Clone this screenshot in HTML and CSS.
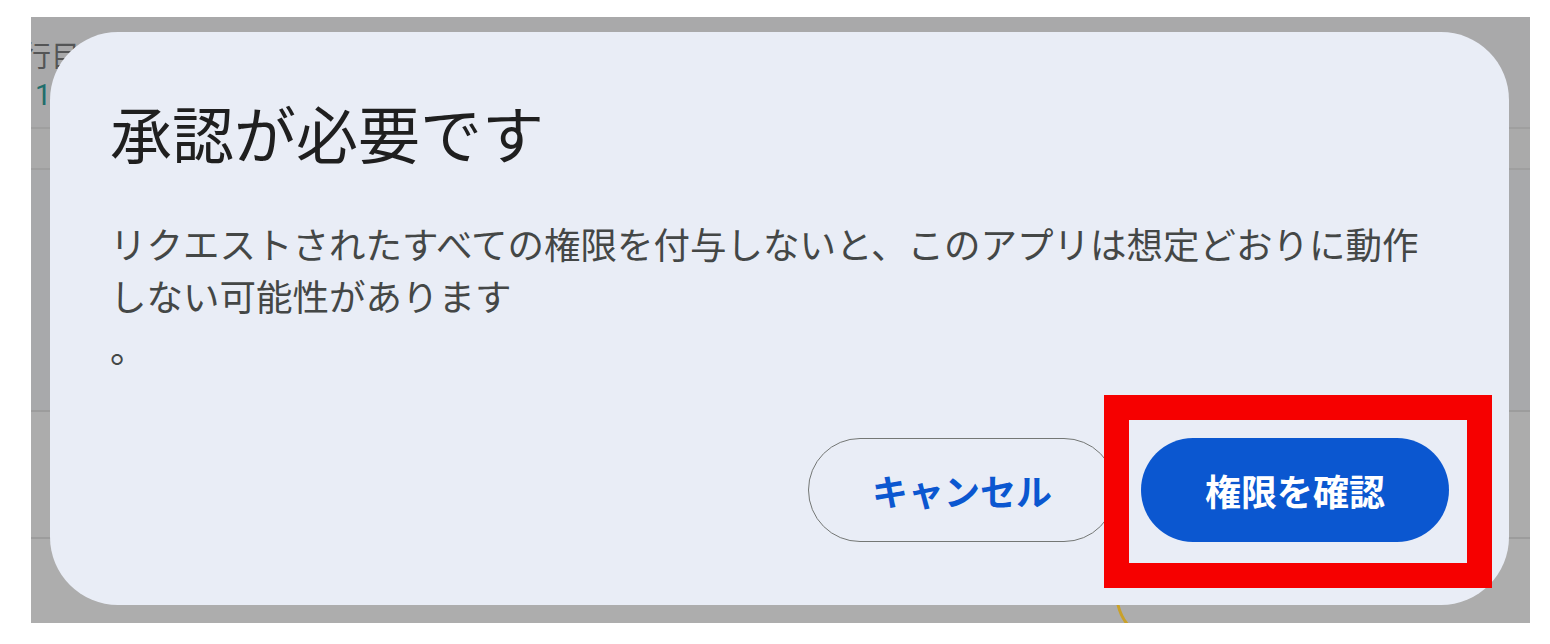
FILE: index.html
```html
<!DOCTYPE html>
<html lang="ja">
<head>
<meta charset="utf-8">
<title>承認が必要です</title>
<link rel="stylesheet" href="styles.css">
</head>
<body>
<div class="backdrop">
  <div class="bg-rows">
    <div class="bg-row r1">
      <div class="bg-label">行目</div>
      <div class="bg-num">1</div>
    </div>
    <div class="bg-row r2"></div>
    <div class="bg-row r3"></div>
    <div class="bg-row r4"></div>
    <div class="bg-row r5"></div>
  </div>
  <svg class="bg-arc" width="20" height="24" viewBox="0 0 20 24"><path d="M3 2 Q6 14 13 22" fill="none" stroke="#c9a12a" stroke-width="3" stroke-linecap="round"/></svg>
  <div class="dialog">
    <h1 class="dialog-title">承認が必要です</h1>
    <p class="dialog-text">リクエストされたすべての権限を付与しないと、このアプリは想定どおりに動作<br>しない可能性があります<br>。</p>
    <div class="dialog-actions">
      <button class="btn btn-outline">キャンセル</button>
      <div class="highlight-wrap">
        <button class="btn btn-filled">権限を確認</button>
        <div class="highlight"></div>
      </div>
    </div>
  </div>
</div>
</body>
</html>
```
FILE: styles.css
```css
html, body {
  margin: 0;
  padding: 0;
  background: #ffffff;
}
body {
  padding: 17px 20px 21px 31px;
  font-family: "Noto Sans CJK JP", "Noto Sans", sans-serif;
}
.backdrop {
  position: relative;
  width: 1499px;
  height: 606px;
  background: #ababab;
  overflow: hidden;
}
.bg-rows {
  display: flex;
  flex-direction: column;
  height: 100%;
}
.bg-row {
  box-sizing: border-box;
}
.r1 { height: 110px; background: #a9a9aa; padding-top: 18px; }
.r2 { height: 41px; border-top: 2px solid #9f9f9f; background: #aaaaaa; }
.r3 { height: 242px; border-top: 2px solid #9f9f9f; background: #a8a9ab; }
.r4 { height: 127px; border-top: 2px solid #9c9c9c; background: #acacac; }
.r5 { flex: 1; border-top: 2px solid #9c9c9c; background: #adadad; }
.bg-label {
  margin-left: -9px;
  font-size: 29px;
  line-height: 38px;
  color: #545556;
}
.bg-num {
  margin-left: 4px;
  margin-top: 6px;
  font-family: "Roboto", sans-serif;
  font-size: 29px;
  line-height: 32px;
  color: #1f6e6c;
}
.bg-arc {
  position: absolute;
  left: 1084px;
  top: 586px;
}
.dialog {
  position: absolute;
  top: 15px;
  left: 19px;
  right: 21px;
  bottom: 18px;
  box-sizing: border-box;
  background: #e9edf6;
  border-radius: 68px;
  padding: 64px 60px 63px 60px;
  display: flex;
  flex-direction: column;
}
.dialog-title {
  margin: 0;
  font-size: 62px;
  line-height: 72px;
  font-weight: 400;
  color: #1f1f1f;
}
.dialog-text {
  margin: 50px 0 0 0;
  font-size: 36.5px;
  line-height: 52px;
  color: #444746;
}
.dialog-actions {
  margin-top: 64px;
  display: flex;
  justify-content: flex-end;
  gap: 25px;
}
.btn {
  width: 308px;
  height: 104px;
  border-radius: 52px;
  font-family: "Noto Sans CJK JP", "Noto Sans", sans-serif;
  font-size: 36px;
  font-weight: 700;
  padding: 0;
  cursor: pointer;
}
.btn-outline {
  background: transparent;
  border: 1.5px solid #747775;
  color: #0b57d0;
}
.btn-filled {
  background: #0b57d0;
  border: none;
  color: #ffffff;
}
.highlight-wrap {
  position: relative;
  display: flex;
}
.highlight {
  position: absolute;
  top: -43px;
  left: -37px;
  right: -43px;
  bottom: -46px;
  border: 25px solid #f60000;
  pointer-events: none;
}
```
